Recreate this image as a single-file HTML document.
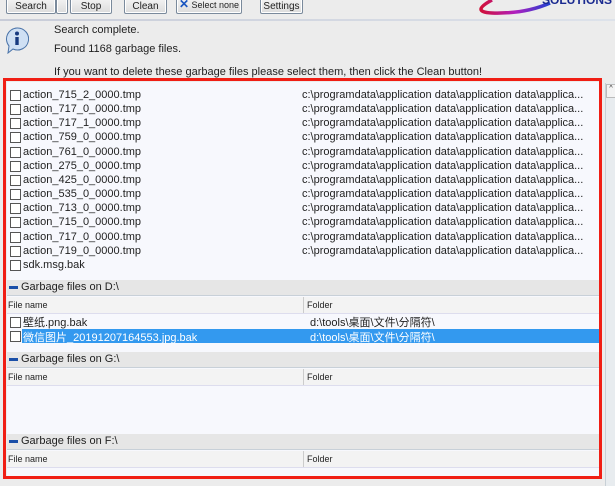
<!DOCTYPE html>
<html><head><meta charset="utf-8"><style>
body{margin:0;width:615px;height:486px;background:#ececec;font-family:"Liberation Sans","Noto Sans CJK SC",sans-serif;font-size:11px;color:#222;position:relative;overflow:hidden}
.a{position:absolute;white-space:nowrap}
.btn{position:absolute;top:-4px;height:16px;border:1px solid #7a8a9c;border-radius:2px;background:linear-gradient(#f6f6f6,#dcdcdc);font-size:10px;text-align:center;line-height:20px;box-shadow:inset 0 0 0 1px #fff;white-space:nowrap;overflow:hidden}
.cb{position:absolute;width:9px;height:9px;border:1px solid #555;background:#fff}
.sec{position:absolute;left:7px;width:593px;height:15px;background:#e6e6e6;border-bottom:1px solid #c8d0d8;line-height:15px}
.sec i{position:absolute;left:2px;top:6px;width:9px;height:3px;background:#1a4fa8}
.sec span{position:absolute;left:14px;font-size:11px}
.hd{position:absolute;left:7px;width:593px;height:16px;background:#f3f3f3;border-bottom:1px solid #dde;font-size:9px;line-height:16px}
</style></head><body>
<div class="btn" style="left:6px;width:48px">Search</div>
<div class="btn" style="left:56px;width:10px"></div>
<div class="btn" style="left:70px;width:40px">Stop</div>
<div class="btn" style="left:124px;width:41px">Clean</div>
<div class="btn" style="left:176px;width:64px;line-height:14px;font-size:9px"><span style="color:#1a56c0;font-weight:bold;font-size:12px">✕</span> Select none</div>
<div class="btn" style="left:260px;width:41px">Settings</div>
<svg class="a" style="left:470px;top:0" width="145" height="16"><path d="M22 0 Q0 12 22 13 Q55 14 80 3" stroke="url(#g)" stroke-width="3.5" fill="none"/><defs><linearGradient id="g"><stop offset="0" stop-color="#d0103a"/><stop offset=".5" stop-color="#b020c0"/><stop offset="1" stop-color="#2040d0"/></linearGradient></defs><text x="72" y="4" font-family="Liberation Sans" font-weight="bold" font-size="12" fill="#1a2a90">SOLUTIONS</text></svg>
<div class="a" style="left:0;top:19px;width:615px;height:2px;background:linear-gradient(90deg,#c8ccd8,#dde2ea)"></div>
<svg class="a" style="left:5px;top:27px" width="24" height="27"><path d="M12 1a11 11 0 1 1-4 21l-5 4 1-7A11 11 0 0 1 12 1z" fill="#cfe0f4" stroke="#4a73a8"/><circle cx="12" cy="6.5" r="2" fill="#173a80"/><rect x="10.3" y="10" width="3.4" height="8" fill="#173a80"/></svg>
<div class="a" style="left:54px;top:24px">Search complete.</div>
<div class="a" style="left:54px;top:43px">Found 1168 garbage files.</div>
<div class="a" style="left:54px;top:66px">If you want to delete these garbage files please select them, then click the Clean button!</div>
<div class="a" style="left:7px;top:82px;width:594px;height:394px;background:#f7f8fd"></div>
<div class="a" style="left:605px;top:83px;width:10px;height:403px;background:#e8ecef;border-left:1px solid #c8d0d6"></div>
<div class="a" style="left:606px;top:84px;width:8px;height:12px;background:#f4f4f4;border:1px solid #bbb;font-size:7px;text-align:center;overflow:hidden">^</div>
<div id="list"></div>
<div class="sec" style="top:280px"><i></i><span>Garbage files on D:\</span></div>
<div class="hd" style="top:297px"><span class="a" style="left:1px">File name</span><span class="a" style="left:296px;border-left:1px solid #ccc;padding-left:3px">Folder</span></div>
<div class="cb" style="left:10px;top:317px"></div><div class="a" style="left:23px;top:314px">壁纸.png.bak</div><div class="a" style="left:310px;top:314px">d:\tools\桌面\文件\分隔符\</div>
<div class="a" style="left:22px;top:329px;width:578px;height:14px;background:#3399ef"></div>
<div class="cb" style="left:10px;top:331px"></div><div class="a" style="left:23px;top:329px;color:#fff">微信图片_20191207164553.jpg.bak</div><div class="a" style="left:310px;top:329px;color:#fff">d:\tools\桌面\文件\分隔符\</div>
<div class="sec" style="top:352px"><i></i><span>Garbage files on G:\</span></div>
<div class="hd" style="top:369px"><span class="a" style="left:1px">File name</span><span class="a" style="left:296px;border-left:1px solid #ccc;padding-left:3px">Folder</span></div>
<div class="sec" style="top:434px"><i></i><span>Garbage files on F:\</span></div>
<div class="hd" style="top:451px"><span class="a" style="left:1px">File name</span><span class="a" style="left:296px;border-left:1px solid #ccc;padding-left:3px">Folder</span></div>
<div class="a" style="left:3px;top:78px;width:593px;height:395px;border:3px solid #f01e14"></div>
<script>
var n=["action_715_2_0000.tmp","action_717_0_0000.tmp","action_717_1_0000.tmp","action_759_0_0000.tmp","action_761_0_0000.tmp","action_275_0_0000.tmp","action_425_0_0000.tmp","action_535_0_0000.tmp","action_713_0_0000.tmp","action_715_0_0000.tmp","action_717_0_0000.tmp","action_719_0_0000.tmp","sdk.msg.bak"],h="";
n.forEach(function(s,i){var t=Math.round(88+i*14.15);h+='<div class="cb" style="left:10px;top:'+(t+2)+'px"></div><div class="a" style="left:23px;top:'+t+'px;line-height:14px">'+s+'</div>';if(i<12)h+='<div class="a" style="left:302px;top:'+t+'px;line-height:14px">c:\\programdata\\application data\\application data\\applica...</div>';});
document.getElementById("list").innerHTML=h;
</script>
</body></html>
